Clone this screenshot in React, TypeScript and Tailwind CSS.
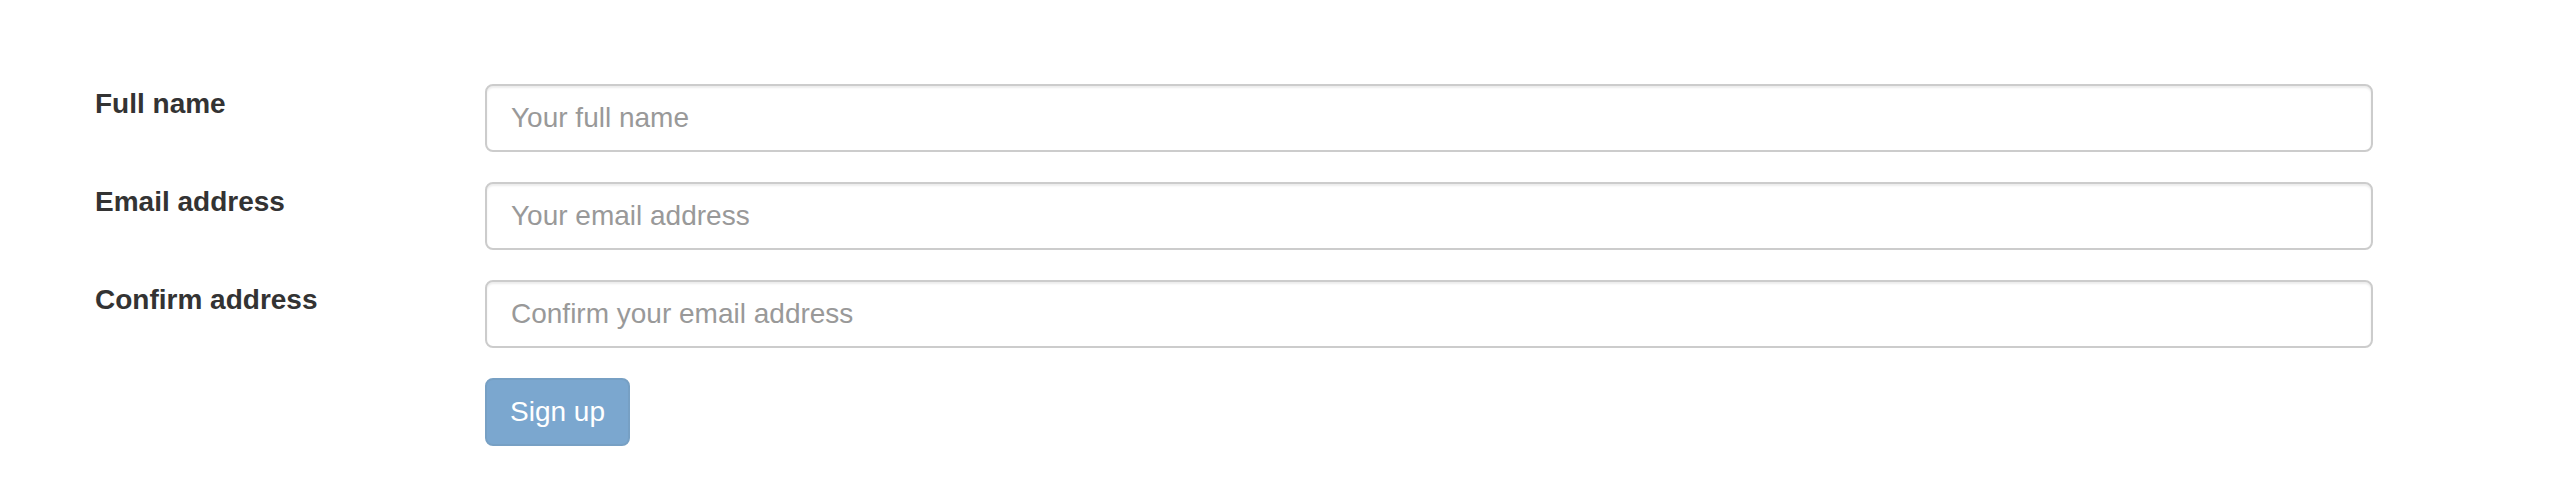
const fields = [
  { label: "Full name", placeholder: "Your full name", type: "text" },
  { label: "Email address", placeholder: "Your email address", type: "email" },
  { label: "Confirm address", placeholder: "Confirm your email address", type: "email" },
];

const App = () => {
  return (
    <main className="min-h-screen w-full bg-white pt-[84px] pl-[95px] font-['Liberation_Sans',Arial,sans-serif] text-[28px] leading-[40px] text-[#333]">
      <form className="flex flex-col gap-[30px]">
        {fields.map((field) => (
          <div key={field.label} className="flex items-start">
            <label className="w-[390px] shrink-0 font-bold">{field.label}</label>
            <input
              type={field.type}
              placeholder={field.placeholder}
              className="h-[68px] w-[1888px] rounded-[8px] border-2 border-[#ccc] bg-white px-[24px] text-[28px] leading-[40px] text-[#555] shadow-[inset_0_2px_2px_rgba(0,0,0,0.075)] outline-none placeholder:text-[#999]"
            />
          </div>
        ))}
        <div className="flex">
          <div className="w-[390px] shrink-0" />
          <button
            type="submit"
            disabled
            className="h-[68px] rounded-[8px] border-2 border-[#77a0c4] bg-[#7ba7cf] px-[23px] text-[28px] leading-[40px] text-white"
          >
            Sign up
          </button>
        </div>
      </form>
    </main>
  );
};

export default App;
